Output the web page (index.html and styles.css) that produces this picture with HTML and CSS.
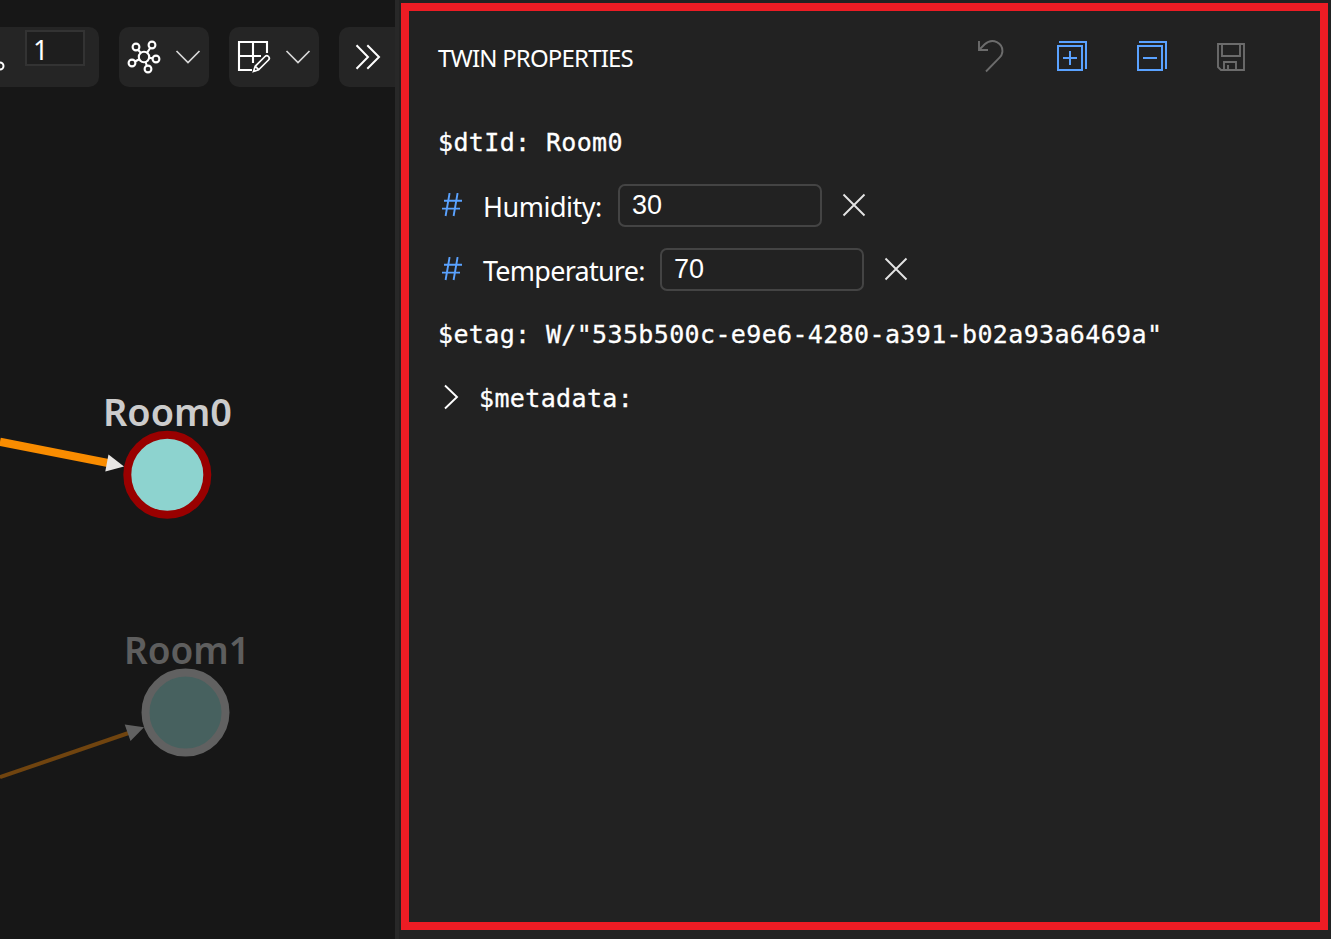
FILE: index.html
```html
<!DOCTYPE html>
<html lang="en">
<head>
<meta charset="utf-8">
<title>Twin properties</title>
<link rel="stylesheet" href="styles.css">
</head>
<body>
<div class="app">
  <section class="explorer">
    <div class="toolbar">
      <div class="tool tool-depth">
        <svg class="depth-icon" width="5" height="60" viewBox="0 0 5 60"><circle cx="0" cy="39" r="3.5"/></svg>
        <div class="depth-input">1</div>
      </div>
      <div class="tool tool-menu">
        <svg class="icon" width="34" height="34" viewBox="0 0 34 34">
          <circle cx="17" cy="17" r="5.2"/><circle cx="9" cy="7" r="3.4"/><circle cx="25" cy="5" r="3.4"/><circle cx="29" cy="19" r="3.4"/><circle cx="21" cy="29" r="3.4"/><circle cx="5" cy="23" r="3.4"/>
          <path d="M11 9.7l2.8 3.2M23.2 8l-3.2 4.8M25.6 18.4l-3.5-.6M19.8 25.7l-1.2-3.7M8 21.5l4.3-2.3"/>
        </svg>
        <svg class="chevron" width="26" height="16" viewBox="0 0 26 16"><path d="M1.5 2L13 13.5 24.5 2"/></svg>
      </div>
      <div class="tool tool-menu">
        <svg class="icon" width="34" height="34" viewBox="0 0 34 34">
          <path d="M30 13V2H2v28h13M16 2v21M2 16h22"/>
          <path d="M16.5 31.5l1.7-5.2L28 16.5a2.4 2.4 0 0 1 3.5 3.5L21.6 29.8zM18.4 26.4l3.2 3.2" stroke-width="1.7"/>
        </svg>
        <svg class="chevron" width="26" height="16" viewBox="0 0 26 16"><path d="M1.5 2L13 13.5 24.5 2"/></svg>
      </div>
      <div class="tool tool-more">
        <svg class="more" width="26" height="26" viewBox="0 0 26 26"><path d="M1.5 1.3L13 13 1.5 24.7M12.3 1.3L24 13 12.3 24.7"/></svg>
      </div>
    </div>
    <svg class="graph" width="395" height="852" viewBox="0 87 395 852">
      <path class="edge edge-active" d="M0 441.8L108 463"/>
      <path class="arrow arrow-active" d="M108.5 454.5L124 466.5 105.3 471.5z"/>
      <circle class="node node-active" cx="167.3" cy="474.8" r="40"/>
      <text class="node-label" x="103" y="425.5" textLength="129" lengthAdjust="spacingAndGlyphs">Room0</text>
      <path class="edge edge-dim" d="M0 777.2L130 732.5"/>
      <path class="arrow arrow-dim" d="M124.7 724.5L144 727.3 130.5 741z"/>
      <circle class="node node-dim" cx="185.5" cy="712.6" r="40"/>
      <text class="node-label node-label-dim" x="124" y="663.5" textLength="126" lengthAdjust="spacingAndGlyphs">Room1</text>
    </svg>
  </section>
  <aside class="side">
    <div class="panel">
      <header class="panel-head">
        <h1 class="title">TWIN PROPERTIES</h1>
        <div class="actions">
          <svg class="action disabled" width="32" height="34" viewBox="0 0 32 34"><path d="M3 2v9h9M3.5 10.5L8.7 5.3C16.5-2 27.5 4 26.3 13.5c-.3 2-1.3 3.7-2.8 5.2L10 32.5"/></svg>
          <svg class="action" width="32" height="34" viewBox="0 0 32 34"><path d="M2 7h24v24H2zM3 3h27v27M14 12v14M7 19h14"/></svg>
          <svg class="action" width="32" height="34" viewBox="0 0 32 34"><path d="M2 7h24v24H2zM3 3h27v27M7 19h14"/></svg>
          <svg class="action disabled" width="32" height="34" viewBox="0 0 32 34"><path d="M2 5h26v26H5l-3-3zM6 5v12h18V5M8 31v-8h12v8M12 31v-5"/></svg>
        </div>
      </header>
      <div class="row mono"><span class="mono-text">$dtId: Room0</span></div>
      <div class="row">
        <svg class="hash" width="20" height="24" viewBox="0 0 20 24"><path d="M7.6 0L3.6 23M15.6 0L11.6 23M2 7.8h18M0 15.6h18"/></svg>
        <span class="name name-humidity">Humidity:</span>
        <div class="field">30</div>
        <svg class="remove" width="24" height="24" viewBox="0 0 24 24"><path d="M1.5 1.5l21 21M22.5 1.5l-21 21"/></svg>
      </div>
      <div class="row">
        <svg class="hash" width="20" height="24" viewBox="0 0 20 24"><path d="M7.6 0L3.6 23M15.6 0L11.6 23M2 7.8h18M0 15.6h18"/></svg>
        <span class="name name-temperature">Temperature:</span>
        <div class="field">70</div>
        <svg class="remove" width="24" height="24" viewBox="0 0 24 24"><path d="M1.5 1.5l21 21M22.5 1.5l-21 21"/></svg>
      </div>
      <div class="row mono"><span class="mono-text">$etag: W/"535b500c-e9e6-4280-a391-b02a93a6469a"</span></div>
      <div class="row mono">
        <svg class="expand" width="15" height="26" viewBox="0 0 15 26"><path d="M1 1.5L13 13 1 24.5"/></svg>
        <span class="mono-text">$metadata:</span>
      </div>
    </div>
  </aside>
</div>
</body>
</html>
```
FILE: styles.css
```css
* { box-sizing: border-box; }
body {
  margin: 0;
  background: #222;
  color: #fff;
  font-family: "Noto Sans", "Open Sans", sans-serif;
}
svg { display: block; flex: none; fill: none; }
.app { display: flex; width: 1331px; height: 939px; overflow: hidden; }

.explorer { width: 395px; flex: none; background: #171717; overflow: hidden; }
.toolbar { display: flex; gap: 20px; height: 87px; padding-top: 27px; }
.tool {
  display: flex;
  flex: none;
  height: 60px;
  border-radius: 10px;
  background: #252525;
  stroke: #fff;
  stroke-width: 2;
}
.tool-depth { width: 99px; gap: 20px; border-radius: 0 10px 10px 0; }
.depth-input {
  width: 60px;
  height: 36px;
  margin-top: 3px;
  padding-left: 6px;
  border: 2px solid #333;
  background: #1e1e1e;
  font-size: 27px;
  line-height: 35px;
}
.icon { stroke-width: 2.1; }
.tool-menu { width: 90px; padding: 13px 0 0 8px; gap: 14px; }
.chevron { margin-top: 9px; stroke: #d8d8d8; stroke-width: 1.7; }
.tool-more { width: 76px; padding: 17px 0 0 16px; }

.edge-active { stroke: #f98c00; stroke-width: 8; }
.edge-dim { stroke: #70440f; stroke-width: 4; }
.arrow-active { fill: #e8e6e4; }
.arrow-dim { fill: #616161; }
.node { stroke-width: 8; }
.node-active { fill: #8dd3cf; stroke: #990000; }
.node-dim { fill: #47615f; stroke: #616161; }
.node-label { fill: #ccc; font-size: 38px; font-weight: 600; }
.node-label-dim { fill: #5e5e5e; }

.side { flex: 1; padding: 3px 3px 9px 2px; border-left: 4px solid #282828; }
.panel { height: 927px; border: 8px solid #ed1c24; padding-left: 29px; }
.panel-head { display: flex; justify-content: space-between; height: 99px; padding-right: 72px; }
.title {
  margin: 31px 0 0;
  font-size: 24px;
  font-weight: 400;
  line-height: 32px;
  letter-spacing: -0.83px;
  white-space: nowrap;
}
.actions { display: flex; gap: 48px; padding-top: 28px; }
.action { stroke: #5aa2ff; stroke-width: 2; }
.disabled { stroke: #6c6c6c; stroke-width: 1.9; }
.row { display: flex; align-items: center; height: 64px; }
.mono { font-family: "DejaVu Sans Mono", monospace; font-size: 25px; }
.mono-text { letter-spacing: 0.36px; white-space: pre; -webkit-text-stroke: 0.3px #fff; }
.hash { margin: 0 21px 3px 4px; stroke: #5aa2ff; stroke-width: 1.9; }
.name { font-size: 27px; white-space: nowrap; }
.name-humidity { width: 135px; letter-spacing: -0.5px; }
.name-temperature { width: 177px; letter-spacing: -0.75px; }
.field {
  width: 204px;
  height: 43px;
  margin-bottom: 2px;
  padding-left: 12px;
  border: 2px solid #444;
  border-radius: 7px;
  font: 27px/38px "Liberation Sans", Arial, sans-serif;
}
.remove { margin: 0 0 2px 20px; stroke: #e4e4e4; stroke-width: 1.9; }
.expand { margin: 0 20px 2px 6px; stroke: #fff; stroke-width: 1.9; }
```
